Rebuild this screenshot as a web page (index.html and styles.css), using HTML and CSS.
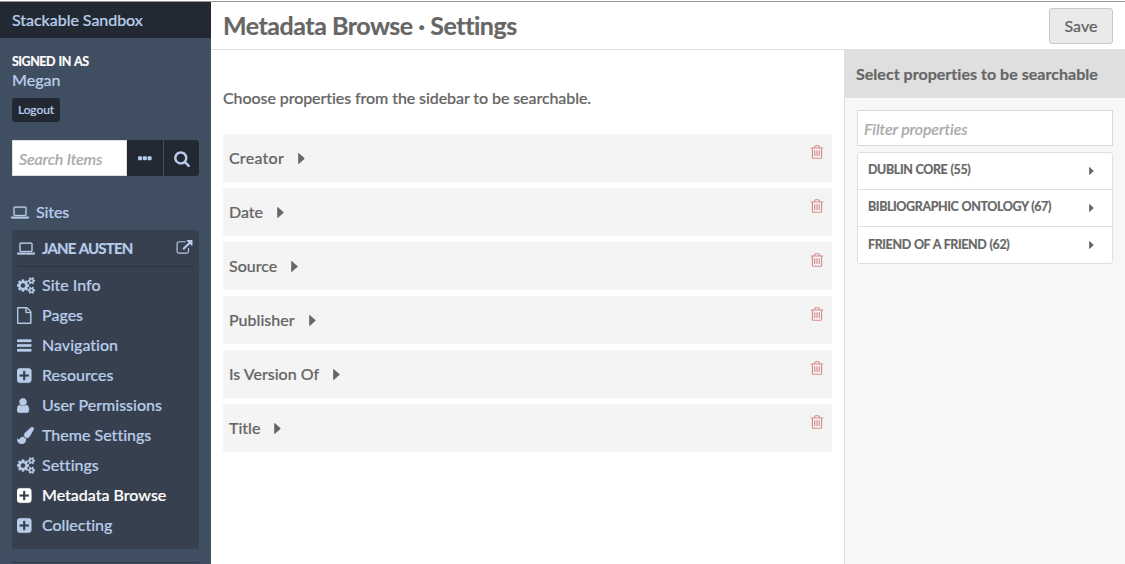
FILE: index.html
```
<!DOCTYPE html>
<html lang="en">
<head>
<meta charset="utf-8">
<title>Metadata Browse · Settings</title>
<link rel="stylesheet" href="styles.css">
</head>
<body>
<svg class="defs" width="0" height="0">
<symbol id="laptop" viewBox="0 0 1920 1792"><path d="M416 1280q-66 0-113-47t-47-113v-704q0-66 47-113t113-47h1088q66 0 113 47t47 113v704q0 66-47 113t-113 47h-1088zm-32-864v704q0 13 9.500 22.500t22.500 9.500h1088q13 0 22.500-9.500t9.500-22.500v-704q0-13-9.500-22.500t-22.500-9.500h-1088q-13 0-22.500 9.500t-9.500 22.500zm1376 928h160v96q0 40-47 68t-113 28h-1600q-66 0-113-28t-47-68v-96h1760zm-720 96q16 0 16-16t-16-16h-160q-16 0-16 16t16 16h160z"/></symbol>
<symbol id="external" viewBox="0 0 1792 1792"><path d="M1408 928v320q0 119-84.500 203.500t-203.500 84.500h-832q-119 0-203.500-84.500t-84.500-203.500v-832q0-119 84.500-203.500t203.500-84.500h704q14 0 23 9t9 23v64q0 14-9 23t-23 9h-704q-66 0-113 47t-47 113v832q0 66 47 113t113 47h832q66 0 113-47t47-113v-320q0-14 9-23t23-9h64q14 0 23 9t9 23zm384-864v512q0 26-19 45t-45 19-45-19l-176-176-652 652q-10 10-23 10t-23-10l-114-114q-10-10-10-23t10-23l652-652-176-176q-19-19-19-45t19-45 45-19h512q26 0 45 19t19 45z"/></symbol>
<symbol id="cogs" viewBox="0 0 1920 1792"><path d="M896 896q0-106-75-181t-181-75-181 75-75 181 75 181 181 75 181-75 75-181zm768 512q0-52-38-90t-90-38-90 38-38 90q0 53 37.500 90.500t90.500 37.500 90.500-37.500 37.500-90.500zm0-1024q0-52-38-90t-90-38-90 38-38 90q0 53 37.500 90.500t90.500 37.500 90.500-37.500 37.500-90.500zm-384 421v185q0 10-7 19.500t-16 10.500l-155 24q-11 35-32 76 34 48 90 115 7 11 7 20 0 12-7 19-23 30-82.500 89.500t-78.500 59.500q-11 0-21-7l-115-90q-37 19-77 31-11 108-23 155-7 24-30 24h-186q-11 0-20-7.500t-10-17.500l-23-153q-34-10-75-31l-118 89q-7 7-20 7-11 0-21-8-144-133-144-160 0-9 7-19 10-14 41-53t47-61q-23-44-35-82l-152-24q-10-1-17-9.500t-7-19.500v-185q0-10 7-19.500t16-10.500l155-24q11-35 32-76-34-48-90-115-7-11-7-20 0-12 7-20 22-30 82-89t79-59q11 0 21 7l115 90q34-18 77-32 11-108 23-154 7-24 30-24h186q11 0 20 7.500t10 17.500l23 153q34 10 75 31l118-89q8-7 20-7 11 0 21 8 144 133 144 160 0 8-7 19-12 16-42 54t-45 60q23 48 34 82l152 23q10 2 17 10.500t7 19.500zm640 533v140q0 16-149 31-12 27-30 52 51 113 51 138 0 4-4 7-122 71-124 71-8 0-46-47t-52-68q-20 2-30 2t-30-2q-14 21-52 68t-46 47q-2 0-124-71-4-3-4-7 0-25 51-138-18-25-30-52-149-15-149-31v-140q0-16 149-31 13-29 30-52-51-113-51-138 0-4 4-7 4-2 35-20t59-34 30-16q8 0 46 46.500t52 67.500q20-2 30-2t30 2q51-71 92-112l6-2q4 0 124 70 4 3 4 7 0 25-51 138 17 23 30 52 149 15 149 31zm0-1024v140q0 16-149 31-12 27-30 52 51 113 51 138 0 4-4 7-122 71-124 71-8 0-46-47t-52-68q-20 2-30 2t-30-2q-14 21-52 68t-46 47q-2 0-124-71-4-3-4-7 0-25 51-138-18-25-30-52-149-15-149-31v-140q0-16 149-31 13-29 30-52-51-113-51-138 0-4 4-7 4-2 35-20t59-34 30-16q8 0 46 46.500t52 67.500q20-2 30-2t30 2q51-71 92-112l6-2q4 0 124 70 4 3 4 7 0 25-51 138 17 23 30 52 149 15 149 31z"/></symbol>
<symbol id="file" viewBox="128 0 1920 1792"><path d="M1596 380q28 28 48 76t20 88v1152q0 40-28 68t-68 28h-1344q-40 0-68-28t-28-68v-1600q0-40 28-68t68-28h896q40 0 88 20t76 48zm-444-244v376h376q-10-29-22-41l-313-313q-12-12-41-22zm384 1528v-1024h-416q-40 0-68-28t-28-68v-416h-768v1536h1280z"/></symbol>
<symbol id="bars" viewBox="128 0 1920 1792"><path d="M128 320q0-64 64-64h1408q64 0 64 64v128q0 64-64 64h-1408q-64 0-64-64zM128 832q0-64 64-64h1408q64 0 64 64v128q0 64-64 64h-1408q-64 0-64-64zM128 1344q0-64 64-64h1408q64 0 64 64v128q0 64-64 64h-1408q-64 0-64-64z"/></symbol>
<symbol id="plus" viewBox="128 0 1920 1792"><path d="M1408 960v-128q0-26-19-45t-45-19h-320v-320q0-26-19-45t-45-19h-128q-26 0-45 19t-19 45v320h-320q-26 0-45 19t-19 45v128q0 26 19 45t45 19h320v320q0 26 19 45t45 19h128q26 0 45-19t19-45v-320h320q26 0 45-19t19-45zm256-544v960q0 119-84.500 203.500t-203.500 84.500h-960q-119 0-203.500-84.500t-84.500-203.500v-960q0-119 84.500-203.500t203.500-84.500h960q119 0 203.500 84.500t84.500 203.500z"/></symbol>
<symbol id="user" viewBox="256 0 1920 1792"><path d="M1536 1399q0 109-62.500 187t-150.500 78h-854q-88 0-150.500-78t-62.500-187q0-85 8.500-160.500t31.500-152 58.500-131 94-89 134.500-34.500q131 128 313 128t313-128q76 0 134.500 34.500t94 89 58.500 131 31.500 152 8.500 160.500zm-256-887q0 159-112.500 271.500t-271.500 112.500-271.500-112.500-112.500-271.500 112.500-271.500 271.500-112.500 271.500 112.500 112.500 271.500z"/></symbol>
<symbol id="brush" viewBox="0 0 1920 1792"><path d="M1615 0q70 0 122.500 46.500t52.500 116.500q0 63-45 151-332 629-465 752-97 91-218 91-126 0-216.500-92.500t-90.500-219.500q0-128 92-212l638-579q59-54 130-54zm-909 1034q39 76 106.500 130t150.500 76l1 71q4 213-129.500 347t-348.500 134q-123 0-218-46.500t-152.500-127.500-86.500-183-29-220q7 5 41 30t62 44.500 59 36.500 46 17q41 0 55-37 25-66 57.500-112.500t69.500-76 88-47.500 103-25.500 125-10.500z"/></symbol>
<symbol id="search" viewBox="0 0 1792 1792"><path d="M1216 832q0-185-131.500-316.500t-316.500-131.500-316.500 131.500-131.500 316.500 131.500 316.500 316.500 131.500 316.500-131.500 131.500-316.500zm512 832q0 52-38 90t-90 38q-54 0-90-38l-343-342q-179 124-399 124-143 0-273.500-55.500t-225-150-150-225-55.500-273.500 55.500-273.500 150-225 225-150 273.500-55.500 273.500 55.500 225 150 150 225 55.500 273.500q0 220-124 399l343 343q37 37 37 90z"/></symbol>
<symbol id="dots" viewBox="0 0 14 5"><rect width="4" height="4" y=".3" rx="1"/><rect x="4.800" y=".3" width="4" height="4" rx="1"/><rect x="9.600" y=".3" width="4" height="4" rx="1"/></symbol>
<symbol id="trash" viewBox="0 0 1792 1792"><path d="M704 736v576q0 14-9 23t-23 9h-64q-14 0-23-9t-9-23v-576q0-14 9-23t23-9h64q14 0 23 9t9 23zm256 0v576q0 14-9 23t-23 9h-64q-14 0-23-9t-9-23v-576q0-14 9-23t23-9h64q14 0 23 9t9 23zm256 0v576q0 14-9 23t-23 9h-64q-14 0-23-9t-9-23v-576q0-14 9-23t23-9h64q14 0 23 9t9 23zm128 724v-948h-896v948q0 22 7 40.500t14.500 27 10.500 8.500h832q3 0 10.500-8.500t14.500-27 7-40.500zm-672-1076h448l-48-117q-7-9-17-11h-317q-10 2-17 11zm928 32v64q0 14-9 23t-23 9h-96v948q0 83-47 143.500t-113 60.500h-832q-66 0-113-58.500t-47-141.500v-952h-96q-14 0-23-9t-9-23v-64q0-14 9-23t23-9h309l70-167q15-37 54-63t79-26h320q40 0 79 26t54 63l70 167h309q14 0 23 9t9 23z"/></symbol>
<symbol id="caret" viewBox="0 0 6 10"><path d="M0 .6Q0-.3.700.3L5.600 4.600Q6 5 5.600 5.400L.700 9.700Q0 10.300 0 9.400z"/></symbol>
</svg>
<div class="page">
  <aside class="sidebar">
    <div class="brand">Stackable Sandbox</div>
    <div class="account">
      <div class="signed">SIGNED IN AS</div>
      <div class="name">Megan</div>
      <a class="logout">Logout</a>
    </div>
    <div class="search">
      <div class="search-input">Search Items</div>
      <div class="search-btn"><svg class="dots"><use href="#dots"/></svg></div>
      <div class="search-btn last"><svg class="glass"><use href="#search"/></svg></div>
    </div>
    <div class="sites"><svg class="icon"><use href="#laptop"/></svg>Sites</div>
    <nav class="menu">
      <div class="menu-title"><svg class="icon"><use href="#laptop"/></svg><span class="grow">JANE AUSTEN</span><svg class="ext"><use href="#external"/></svg></div>
      <a class="item"><svg class="icon"><use href="#cogs"/></svg>Site Info</a>
      <a class="item"><svg class="icon"><use href="#file"/></svg>Pages</a>
      <a class="item"><svg class="icon"><use href="#bars"/></svg>Navigation</a>
      <a class="item"><svg class="icon"><use href="#plus"/></svg>Resources</a>
      <a class="item"><svg class="icon"><use href="#user"/></svg>User Permissions</a>
      <a class="item"><svg class="icon"><use href="#brush"/></svg>Theme Settings</a>
      <a class="item"><svg class="icon"><use href="#cogs"/></svg>Settings</a>
      <a class="item active"><svg class="icon"><use href="#plus"/></svg>Metadata Browse</a>
      <a class="item"><svg class="icon"><use href="#plus"/></svg>Collecting</a>
    </nav>
    <div class="rule"></div>
  </aside>
  <div class="main">
    <header class="header"><h1 class="title">Metadata Browse · Settings</h1><div class="save">Save</div></header>
    <div class="body">
      <section class="content">
        <p class="intro">Choose properties from the sidebar to be searchable.</p>
        <div class="rows">
          <div class="row"><span class="wide">Creator</span><svg class="caret"><use href="#caret"/></svg><svg class="trash"><use href="#trash"/></svg></div>
          <div class="row"><span>Date</span><svg class="caret"><use href="#caret"/></svg><svg class="trash"><use href="#trash"/></svg></div>
          <div class="row"><span>Source</span><svg class="caret"><use href="#caret"/></svg><svg class="trash"><use href="#trash"/></svg></div>
          <div class="row"><span>Publisher</span><svg class="caret"><use href="#caret"/></svg><svg class="trash"><use href="#trash"/></svg></div>
          <div class="row"><span>Is Version Of</span><svg class="caret"><use href="#caret"/></svg><svg class="trash"><use href="#trash"/></svg></div>
          <div class="row"><span>Title</span><svg class="caret"><use href="#caret"/></svg><svg class="trash"><use href="#trash"/></svg></div>
        </div>
      </section>
      <aside class="panel">
        <div class="panel-title">Select properties to be searchable</div>
        <div class="filter">Filter properties</div>
        <div class="vocabs">
          <div class="vocab">DUBLIN CORE (55)<svg class="small-caret"><use href="#caret"/></svg></div>
          <div class="vocab">BIBLIOGRAPHIC ONTOLOGY (67)<svg class="small-caret"><use href="#caret"/></svg></div>
          <div class="vocab">FRIEND OF A FRIEND (62)<svg class="small-caret"><use href="#caret"/></svg></div>
        </div>
      </aside>
    </div>
  </div>
</div>
</body>
</html>
```
FILE: styles.css
```
* { box-sizing: border-box; }
body { margin: 0; background: #fff; font: 500 16px/24px Lato, sans-serif; font-variant-ligatures: none; color: #666; overflow: hidden; -webkit-text-stroke: .2px; }
svg { display: block; fill: currentColor; flex: none; }
.defs { position: absolute; }
.page { display: flex; height: 563px; margin-top: 1px; border-top: 1px solid #999; overflow: hidden; }
.sidebar { width: 211px; flex: none; background: #404e61; color: #b8cce9; }
.brand { height: 36px; padding-left: 12px; line-height: 35px; letter-spacing: -.05px; background: #222933; }
.account { height: 102px; padding: 14px 12px 0; }
.signed { font-size: 12.5px; font-weight: 700; line-height: 19px; letter-spacing: -.5px; word-spacing: 1px; color: #fff; }
.name { line-height: 18px; }
.logout { display: inline-block; height: 24px; margin-top: 9px; padding: 0 6px; border-radius: 3px; background: #222933; font-size: 12px; letter-spacing: -.1px; line-height: 24px; vertical-align: top; }
.search { display: flex; height: 36px; margin: 0 12px; }
.search-input { width: 115px; border: 1px solid #ddd; background: #fff; padding-left: 6px; color: #aaa; font-style: italic; letter-spacing: -.15px; line-height: 36px; }
.search-btn { display: flex; width: 36px; align-items: center; justify-content: center; background: #222933; }
.search-btn.last { border-left: 1px solid #404e61; border-radius: 0 3px 3px 0; }
.dots { width: 14px; height: 5px; }
.glass { width: 18px; height: 17px; }
.icon { width: 18px; height: 17px; margin: 0 7px 0 -1px; stroke: currentColor; stroke-width: 30; overflow: visible; }
.sites { display: flex; align-items: center; height: 54px; padding: 18px 12px 0; letter-spacing: -.1px; }
.menu { height: 319px; margin: 0 12px; padding: 0 6px; border-radius: 3px; background: #36404e; }
.menu-title { display: flex; align-items: center; height: 37px; margin-bottom: 3px; border-bottom: 1px solid #29313c; font-weight: 700; }
.grow { flex: 1; font-size: 15px; letter-spacing: -.85px; word-spacing: 1px; }
.ext { width: 17px; height: 16px; }
.item { display: flex; align-items: center; height: 30px; }
.active { color: #fff; }
.rule { margin: 13px 12px 0; height: 1px; background: #303a47; }
.main { display: flex; flex: 1; flex-direction: column; min-width: 0; }
.header { display: flex; height: 48px; padding: 0 12px; align-items: center; justify-content: space-between; border-bottom: 1px solid #dfdfdf; }
.title { margin: -2px 0 0; font-size: 25px; line-height: 36px; font-weight: 700; letter-spacing: -.47px; }
.save { width: 64px; height: 36px; border: 1px solid #c8c8c8; border-radius: 3px; background: #eaeaea; line-height: 34px; text-align: center; }
.body { display: flex; flex: 1; }
.content { flex: 1; padding: 36px 12px 0; }
.intro { margin: 0 0 24px; letter-spacing: -.08px; }
.rows { display: grid; gap: 6px; }
.row { display: flex; align-items: center; height: 48px; padding: 0 7px 0 6px; background: #f4f4f4; }
.wide { letter-spacing: .25px; }
.caret { width: 7px; height: 11px; margin: 0 0 0 14px; }
.trash { width: 16px; height: 16px; margin: -12px 0 0 auto; color: #d68b8b; }
.panel { width: 281px; border-left: 1px solid #dfdfdf; background: #f7f7f7; }
.panel-title { height: 49px; margin-top: -1px; padding-left: 11px; background: #dfdfdf; font-weight: 700; letter-spacing: .03px; line-height: 49px; }
.filter { height: 36px; margin: 12px 12px 6px; padding-left: 6px; border: 1px solid #d8d8d8; background: #fff; color: #aaa; font-style: italic; letter-spacing: -.1px; line-height: 36px; }
.vocabs { margin: 0 12px; border: 1px solid #dfdfdf; border-radius: 3px; background: #fff; }
.vocab { display: flex; justify-content: space-between; align-items: center; height: 37px; padding: 0 18px 2px 10px; border-bottom: 1px solid #dfdfdf; font-size: 12.5px; font-weight: 700; letter-spacing: -.4px; word-spacing: .5px; }
.vocab:last-child { height: 36px; border-bottom: 0; padding-bottom: 1px; }
.small-caret { width: 5px; height: 8px; margin-top: 1px; }
```
